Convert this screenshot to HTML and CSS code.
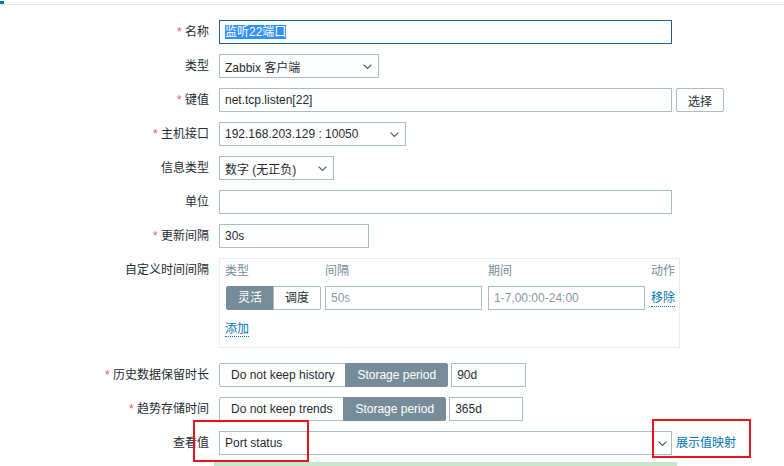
FILE: index.html
```html
<!DOCTYPE html>
<html lang="zh-CN">
<head>
    <meta charset="UTF-8">
    <meta name="viewport" content="width=device-width, initial-scale=1.0">
    <title>监控项 - 监听22端口</title>
    <link rel="stylesheet" href="styles.css">
</head>
<body>
    <div class="topbar"><span class="topbar-mark"></span></div>

    <div class="form">
        <div class="form-row">
            <div class="form-label required">名称</div>
            <div class="form-field">
                <div class="text-input wide is-focused"><span class="text-selected">监听22端口</span></div>
            </div>
        </div>

        <div class="form-row">
            <div class="form-label">类型</div>
            <div class="form-field">
                <div class="select select-type">
                    <span>Zabbix 客户端</span>
                    <svg class="chevron" width="9" height="5" viewBox="0 0 9 5"><path d="M.6.6l3.9 3.8L8.4.6" /></svg>
                </div>
            </div>
        </div>

        <div class="form-row">
            <div class="form-label required">键值</div>
            <div class="form-field">
                <input type="text" class="text-input wide" value="net.tcp.listen[22]">
                <button class="btn">选择</button>
            </div>
        </div>

        <div class="form-row">
            <div class="form-label required">主机接口</div>
            <div class="form-field">
                <div class="select select-interface">
                    <span>192.168.203.129 : 10050</span>
                    <svg class="chevron" width="9" height="5" viewBox="0 0 9 5"><path d="M.6.6l3.9 3.8L8.4.6" /></svg>
                </div>
            </div>
        </div>

        <div class="form-row">
            <div class="form-label">信息类型</div>
            <div class="form-field">
                <div class="select select-value-type">
                    <span>数字 (无正负)</span>
                    <svg class="chevron" width="9" height="5" viewBox="0 0 9 5"><path d="M.6.6l3.9 3.8L8.4.6" /></svg>
                </div>
            </div>
        </div>

        <div class="form-row">
            <div class="form-label">单位</div>
            <div class="form-field">
                <input type="text" class="text-input wide" value="">
            </div>
        </div>

        <div class="form-row">
            <div class="form-label required">更新间隔</div>
            <div class="form-field">
                <input type="text" class="text-input short" value="30s">
            </div>
        </div>

        <div class="form-row form-row-block">
            <div class="form-label">自定义时间间隔</div>
            <div class="form-field">
                <div class="interval-box">
                    <div class="interval-grid">
                        <div class="interval-head">类型</div>
                        <div class="interval-head">间隔</div>
                        <div class="interval-head">期间</div>
                        <div class="interval-head">动作</div>

                        <div class="segmented segmented-small">
                            <span class="segmented-item is-active">灵活</span>
                            <span class="segmented-item">调度</span>
                        </div>
                        <input type="text" class="text-input interval-input" placeholder="50s">
                        <input type="text" class="text-input interval-input" placeholder="1-7,00:00-24:00">
                        <a class="link link-dotted">移除</a>
                    </div>
                    <div class="interval-add"><a class="link link-dotted">添加</a></div>
                </div>
            </div>
        </div>

        <div class="form-row">
            <div class="form-label required">历史数据保留时长</div>
            <div class="form-field">
                <div class="segmented">
                    <span class="segmented-item">Do not keep history</span>
                    <span class="segmented-item is-active">Storage period</span>
                </div>
                <input type="text" class="text-input period-input" value="90d">
            </div>
        </div>

        <div class="form-row">
            <div class="form-label required">趋势存储时间</div>
            <div class="form-field">
                <div class="segmented">
                    <span class="segmented-item">Do not keep trends</span>
                    <span class="segmented-item is-active">Storage period</span>
                </div>
                <input type="text" class="text-input period-input trends" value="365d">
            </div>
        </div>

        <div class="form-row">
            <div class="form-label">查看值</div>
            <div class="form-field">
                <div class="combo">
                    <input type="text" class="text-input combo-input" value="Port status">
                    <span class="combo-button">
                        <svg class="chevron" width="9" height="5" viewBox="0 0 9 5"><path d="M.6.6l3.9 3.8L8.4.6" /></svg>
                    </span>
                </div>
                <a class="link mapping-link">展示值映射</a>
            </div>
        </div>
    </div>

    <div class="status-bar"></div>

    <!-- red annotation frames -->
    <div class="callout callout-value"></div>
    <div class="callout callout-mapping"></div>
</body>
</html>
```

FILE: styles.css
```css
:root {
    --text-color: #1f2c33;
    --border-color: #acbbc4;
    --active-color: #768d99;
    --link-color: #0275b8;
    --required-color: #e45959;
}

* {
    margin: 0;
    padding: 0;
    box-sizing: border-box;
}

body {
    font-family: Arial, "Liberation Sans", "Noto Sans CJK SC", sans-serif;
    font-size: 12px;
    color: var(--text-color);
    background: #fff;
}

.topbar {
    height: 4px;
    border-bottom: 1px solid #e6e6e6;
}

.topbar-mark {
    display: block;
    width: 4px;
    height: 3px;
    margin-top: 1px;
    background: var(--link-color);
}

.form {
    padding-top: 15px;
}

.form-row {
    display: flex;
    align-items: flex-start;
}

.form-row + .form-row {
    margin-top: 10px;
}

.form-row-block + .form-row {
    margin-top: 15px;
}

.form-label {
    flex-shrink: 0;
    width: 209px;
    margin-right: 10px;
    text-align: right;
    line-height: 24px;
    white-space: nowrap;
}

.form-label.required::before {
    content: "* ";
    color: var(--required-color);
}

.form-field {
    display: flex;
    align-items: center;
}

.text-input {
    height: 24px;
    padding: 0 5px;
    border: 1px solid var(--border-color);
    background: #fff;
    font: inherit;
    line-height: 22px;
    color: var(--text-color);
    outline: none;
}

.text-input::placeholder {
    color: #8c9aa3;
}

.wide {
    width: 453px;
}

.short {
    width: 150px;
}

.is-focused {
    border-color: #1c5f95;
}

.text-selected {
    background: #3390ff;
    color: #fff;
}

.btn {
    width: 48px;
    height: 24px;
    margin-left: 4px;
    border: 1px solid var(--border-color);
    border-radius: 2px;
    background: #fff;
    font: inherit;
    color: var(--text-color);
}

.select {
    display: flex;
    align-items: center;
    justify-content: space-between;
    height: 24px;
    padding: 0 6px 0 5px;
    border: 1px solid var(--border-color);
    background: #fff;
    white-space: nowrap;
}

.select-type {
    width: 160px;
}

.select-interface {
    width: 187px;
}

.select-value-type {
    width: 115px;
}

.chevron path {
    fill: none;
    stroke: #4f5a60;
    stroke-width: 1.2;
}

/* custom intervals table */
.interval-box {
    width: 461px;
    padding: 2px 2px 8px 5px;
    border: 1px solid #ebeef0;
}

.interval-grid {
    display: grid;
    grid-template-columns: 100px 163px 163px 1fr;
    row-gap: 5px;
    align-items: center;
    white-space: nowrap;
}

.interval-head {
    line-height: 20px;
    color: var(--active-color);
}

.interval-input {
    width: 157px;
}

.interval-add {
    margin-top: 9px;
    line-height: 20px;
}

.link {
    color: var(--link-color);
    cursor: pointer;
    white-space: nowrap;
}

.link-dotted {
    justify-self: start;
    line-height: 16px;
    border-bottom: 1px dotted var(--link-color);
}

.segmented {
    display: inline-flex;
}

.segmented-item {
    height: 24px;
    padding: 0 11px;
    border: 1px solid var(--border-color);
    background: #fff;
    line-height: 22px;
    white-space: nowrap;
}

.segmented-item:first-child {
    border-radius: 2px 0 0 2px;
}

.segmented-item:last-child {
    margin-left: -1px;
    border-radius: 0 2px 2px 0;
}

.segmented-item.is-active {
    background: var(--active-color);
    border-color: var(--active-color);
    color: #fff;
}

.segmented-small {
    margin-left: 1px;
}

.period-input {
    width: 75px;
    margin-left: 3px;
}

.period-input.trends {
    width: 74px;
}

.combo {
    display: flex;
    width: 453px;
}

.combo-input {
    flex: 1;
    min-width: 0;
}

.combo-button {
    display: flex;
    align-items: center;
    justify-content: center;
    width: 19px;
    height: 24px;
    border: 1px solid var(--border-color);
    border-left: none;
    background: #fff;
}

.mapping-link {
    margin-left: 4px;
    line-height: 24px;
}

.status-bar {
    width: 463px;
    height: 10px;
    margin: 7px 0 0 214px;
    background: #c8e6c9;
}

.callout {
    position: absolute;
    border: 2px solid #e3151e;
}

.callout-value {
    left: 193px;
    top: 420px;
    width: 116px;
    height: 42px;
}

.callout-mapping {
    left: 652px;
    top: 419px;
    width: 99px;
    height: 39px;
}
```
